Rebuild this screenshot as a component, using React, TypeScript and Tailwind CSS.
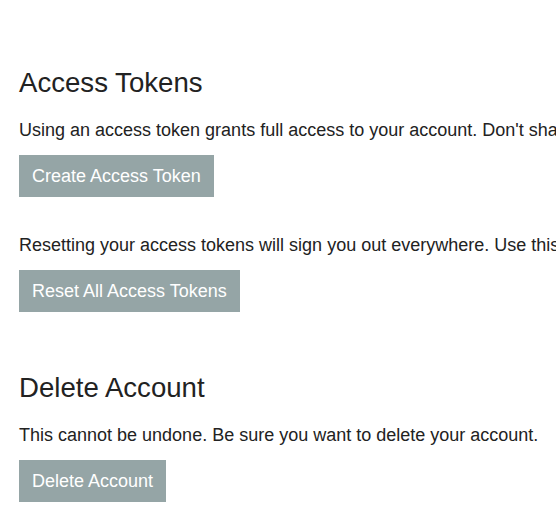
const font = { fontFamily: '"Liberation Sans", Arial, sans-serif' }

function ActionButton({ label }: { label: string }) {
  return (
    <button className="h-[42px] bg-[#95a5a6] px-[13px] text-[18px] leading-none text-white">
      {label}
    </button>
  )
}

export default function App() {
  return (
    <div
      className="h-[531px] w-[556px] overflow-hidden bg-white px-[19px] pt-[67px] text-[#222]"
      style={font}
    >
      <section>
        <h2 className="text-[27.6px] leading-[32px]">Access Tokens</h2>
        <p className="mt-[18px] whitespace-nowrap text-[18px] leading-[27px]">
          Using an access token grants full access to your account. Don't share it with anyone.
        </p>
        <div className="mt-[11px]">
          <ActionButton label="Create Access Token" />
        </div>
        <p className="mt-[35px] whitespace-nowrap text-[18px] leading-[27px]">
          Resetting your access tokens will sign you out everywhere. Use this if a token was leaked.
        </p>
        <div className="mt-[11px]">
          <ActionButton label="Reset All Access Tokens" />
        </div>
      </section>

      <section className="mt-[60px]">
        <h2 className="text-[27.6px] leading-[32px]">Delete Account</h2>
        <p className="mt-[18px] whitespace-nowrap text-[18px] leading-[27px]">
          This cannot be undone. Be sure you want to delete your account.
        </p>
        <div className="mt-[11px]">
          <ActionButton label="Delete Account" />
        </div>
      </section>
    </div>
  )
}
